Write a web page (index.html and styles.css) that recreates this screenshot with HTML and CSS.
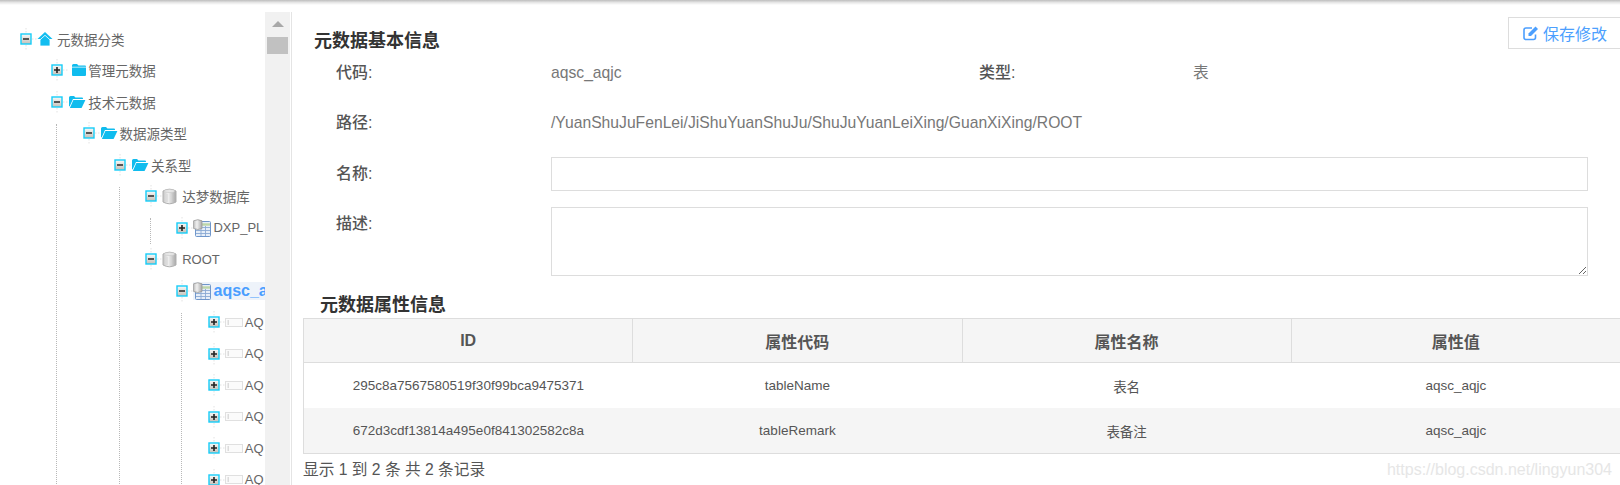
FILE: index.html
```html
<!DOCTYPE html>
<html lang="zh-CN">
<head>
<meta charset="utf-8">
<title>元数据基本信息</title>
<link rel="stylesheet" href="styles.css">
</head>
<body>
<svg class="defs" width="0" height="0" aria-hidden="true">
  <defs>
    <linearGradient id="btn" x1="0" y1="0" x2="0" y2="1"><stop offset="0" stop-color="#fafafa"/><stop offset="1" stop-color="#c4c0b8"/></linearGradient>
    <linearGradient id="cyl" x1="0" y1="0" x2="1" y2="0"><stop offset="0" stop-color="#c4c4c4"/><stop offset=".4" stop-color="#f0f0f0"/><stop offset="1" stop-color="#a8a8a8"/></linearGradient>
    <symbol id="stub" viewBox="0 0 22 24"><path d="M11 1V6M11 18V23M17 12H22" stroke="#e2e2e2" stroke-width="1" stroke-dasharray="1.5 1.5" fill="none"/></symbol>
    <symbol id="minus" viewBox="0 0 22 24"><use href="#stub" width="22" height="24"/><rect x="6" y="7" width="10" height="10" fill="url(#btn)" stroke="#17cdf8" stroke-width="1.4"/><path d="M8 12H14" stroke="#333" stroke-width="1.6"/></symbol>
    <symbol id="plus" viewBox="0 0 22 24"><use href="#stub" width="22" height="24"/><rect x="6" y="7" width="10" height="10" fill="url(#btn)" stroke="#17cdf8" stroke-width="1.4"/><path d="M8 12H14M11 9V15" stroke="#222" stroke-width="1.6"/></symbol>
    <symbol id="house" viewBox="0 0 16 16"><path d="M8 1 15.500 8H.5Z" fill="#12bdf0"/><path d="M3 8.800 8 4.300 13 8.800V15H3Z" fill="#12bdf0" stroke="#fff" stroke-width=".8"/></symbol>
    <symbol id="folder" viewBox="0 0 16 14"><path d="M1 2.500Q1 1 2.500 1H6L7.500 2.600H14Q15 2.600 15 3.600V12Q15 13 14 13H2Q1 13 1 12Z" fill="#10bcee"/><path d="M1 4.200H15" stroke="#fff" stroke-width=".7"/></symbol>
    <symbol id="open" viewBox="0 0 18 14"><path d="M1 2.500Q1 1 2.500 1H6L7.500 2.400H14Q15 2.400 15 3.400V4H5L1.600 11.500 1 11Z" fill="#10bcee"/><path d="M5.400 5H17.400L13.600 13H1.900Z" fill="#10bcee"/></symbol>
    <symbol id="db" viewBox="0 0 15 17"><path d="M1 3Q7.500-.6 14 3V14Q7.500 17.600 1 14Z" fill="url(#cyl)" stroke="#b0b0b0"/><ellipse cx="7.500" cy="3" rx="5" ry="1.500" fill="#e8e8e8" stroke="#c4c4c4" stroke-width=".6"/><path d="M5 6V14M9.500 6V14" stroke="#d4d4d4"/></symbol>
    <symbol id="table" viewBox="0 0 18 18"><rect x="2.500" y="2.500" width="15" height="15" rx="1" fill="#e6eef8" stroke="#6f96cb"/><path d="M3 5.500H17" stroke="#bcd6a8" stroke-width="2.400"/><path d="M3 8.500H17M3 11.500H17M3 14.500H17M8 7V17M12.500 7V17" stroke="#8aa9d4" stroke-width=".9"/><path d="M.6 1.800Q4.800-.4 9 1.800V9.500Q4.800 11.500.6 9.500Z" fill="url(#cyl)" stroke="#999" stroke-width=".8"/></symbol>
    <symbol id="col" viewBox="0 0 18 9"><rect x=".5" y=".5" width="17" height="8" fill="#fbfbfb" stroke="#e0e0e0"/><rect x="2.500" y="2" width="1.500" height="5" fill="#dcdcdc"/></symbol>
  </defs>
</svg>
<div class="topshadow"></div>
<div class="app">
  <aside class="side">
    <nav class="tree">
      <ul class="nodes">
        <li><div class="row"><svg class="tg"><use href="#minus"/></svg><span class="ico"><svg width="16" height="16"><use href="#house"/></svg></span><span class="cjk">元数据分类</span></div>
          <ul class="nodes sub">
            <li><div class="row"><svg class="tg"><use href="#plus"/></svg><span class="ico"><svg class="i-folder" width="16" height="14"><use href="#folder"/></svg></span><span class="cjk">管理元数据</span></div></li>
            <li><div class="row"><svg class="tg"><use href="#minus"/></svg><span class="ico"><svg width="18" height="14"><use href="#open"/></svg></span><span class="cjk">技术元数据</span></div>
              <ul class="nodes sub line">
                <li><div class="row"><svg class="tg"><use href="#minus"/></svg><span class="ico"><svg width="18" height="14"><use href="#open"/></svg></span><span class="cjk">数据源类型</span></div>
                  <ul class="nodes sub">
                    <li><div class="row"><svg class="tg"><use href="#minus"/></svg><span class="ico"><svg width="18" height="14"><use href="#open"/></svg></span><span class="cjk">关系型</span></div>
                      <ul class="nodes sub line">
                        <li><div class="row"><svg class="tg"><use href="#minus"/></svg><span class="ico"><svg width="15" height="17"><use href="#db"/></svg></span><span class="cjk">达梦数据库</span></div>
                          <ul class="nodes sub line">
                            <li><div class="row"><svg class="tg"><use href="#plus"/></svg><span class="ico"><svg width="18" height="18"><use href="#table"/></svg></span><span>DXP_PL</span></div></li>
                          </ul>
                        </li>
                        <li><div class="row"><svg class="tg"><use href="#minus"/></svg><span class="ico"><svg width="15" height="17"><use href="#db"/></svg></span><span>ROOT</span></div>
                          <ul class="nodes sub">
                            <li><div class="row"><svg class="tg"><use href="#minus"/></svg><span class="sel"><span class="ico"><svg width="18" height="18"><use href="#table"/></svg></span><b>aqsc_aqjc</b></span></div>
                              <ul class="nodes sub line">
                                <li><div class="row"><svg class="tg"><use href="#plus"/></svg><span class="ico"><svg width="18" height="9"><use href="#col"/></svg></span><span>AQ</span></div></li>
                                <li><div class="row"><svg class="tg"><use href="#plus"/></svg><span class="ico"><svg width="18" height="9"><use href="#col"/></svg></span><span>AQ</span></div></li>
                                <li><div class="row"><svg class="tg"><use href="#plus"/></svg><span class="ico"><svg width="18" height="9"><use href="#col"/></svg></span><span>AQ</span></div></li>
                                <li><div class="row"><svg class="tg"><use href="#plus"/></svg><span class="ico"><svg width="18" height="9"><use href="#col"/></svg></span><span>AQ</span></div></li>
                                <li><div class="row"><svg class="tg"><use href="#plus"/></svg><span class="ico"><svg width="18" height="9"><use href="#col"/></svg></span><span>AQ</span></div></li>
                                <li><div class="row"><svg class="tg"><use href="#plus"/></svg><span class="ico"><svg width="18" height="9"><use href="#col"/></svg></span><span>AQ</span></div></li>
                              </ul>
                            </li>
                          </ul>
                        </li>
                      </ul>
                    </li>
                  </ul>
                </li>
              </ul>
            </li>
          </ul>
        </li>
      </ul>
    </nav>
    <div class="scrollbar">
      <span class="arrow"></span>
      <span class="thumb"></span>
    </div>
  </aside>
  <main class="main">
    <header class="head">
      <h2 class="title">元数据基本信息</h2>
      <button class="save" type="button">
        <svg width="16" height="16" viewBox="0 0 16 16"><path d="M12.500 9.500V12.500A2 2 0 0 1 10.500 14.500H3A2 2 0 0 1 1 12.500V5A2 2 0 0 1 3 3H9" fill="none" stroke="#4c9ffe" stroke-width="1.600"/><path d="M5.500 8.500 12.500 1.500 15 4 8 11H5.500Z" fill="#4c9ffe"/></svg>
        <span>保存修改</span>
      </button>
    </header>
    <form class="form">
      <label class="lab">代码:</label><div class="val">aqsc_aqjc</div><label class="lab">类型:</label><div class="val">表</div>
      <label class="lab">路径:</label><div class="val wide">/YuanShuJuFenLei/JiShuYuanShuJu/ShuJuYuanLeiXing/GuanXiXing/ROOT</div>
      <label class="lab">名称:</label><input class="field wide" type="text">
      <label class="lab">描述:</label><textarea class="field area wide"></textarea>
    </form>
    <h2 class="title sub-title">元数据属性信息</h2>
    <table class="grid">
      <thead><tr><th>ID</th><th>属性代码</th><th>属性名称</th><th>属性值</th></tr></thead>
      <tbody>
        <tr><td>295c8a7567580519f30f99bca9475371</td><td>tableName</td><td>表名</td><td>aqsc_aqjc</td></tr>
        <tr><td>672d3cdf13814a495e0f841302582c8a</td><td>tableRemark</td><td>表备注</td><td>aqsc_aqjc</td></tr>
      </tbody>
    </table>
    <p class="foot">显示 1 到 2 条 共 2 条记录</p>
  </main>
</div>
<div class="mark">https://blog.csdn.net/lingyun304</div>
</body>
</html>
```
FILE: styles.css
```css
* { box-sizing: border-box; }
html, body { margin: 0; height: 485px; overflow: hidden; background: #fff; }
body {
  position: relative;
  font-family: "Liberation Sans", "Noto Sans CJK SC", sans-serif;
  color: #666;
}
.defs { position: absolute; }
.topshadow {
  position: absolute; left: 0; right: 0; top: 0; height: 5px; z-index: 3;
  background: linear-gradient(#bdbdbd, #e6e6e6 50%, #fff);
}
.app { display: flex; height: 485px; }

/* tree */
.side { display: flex; width: 292px; flex: none; }
.tree {
  width: 265px; flex: none; height: 485px; overflow: hidden;
  padding: 23px 0 0 15px; font-size: 13px; color: #666;
}
.nodes { list-style: none; margin: 0; padding: 0; }
.sub { padding-left: 31.3px; position: relative; }
.line::before {
  content: ""; position: absolute; left: 10px; top: 6px; bottom: 0;
  border-left: 1px dotted #b8b8b8;
}
.row { display: flex; align-items: center; height: 31.5px; white-space: nowrap; position: relative; }
.tg { width: 22px; height: 24px; flex: none; }
.ico { width: 20px; flex: none; display: flex; align-items: center; }
.ico svg { flex: none; }
.i-folder { margin-left: 2.5px; }
.cjk { font-size: 13.5px; }
.sel {
  display: flex; align-items: center; height: 18px; padding-right: 40px;
  background: #eef3fa; color: #4a9eff; font-size: 16px;
}
.sel .ico { width: 20px; }
.scrollbar {
  width: 26px; flex: none; margin-top: 12px; height: 473px; background: #f1f1f1;
  display: flex; flex-direction: column; align-items: center; border-right: 1px solid #fff;
}
.arrow {
  margin-top: 9px; width: 0; height: 0;
  border-left: 6px solid transparent; border-right: 6px solid transparent; border-bottom: 6px solid #a8a8a8;
}
.thumb { margin-top: 10px; width: 21px; height: 17px; background: #c1c1c1; }

/* main */
.main { flex: 1; min-width: 0; border-left: 1px solid #e4e4e4; margin-left: -1px; margin-top: 12px; position: relative; }
.head { display: flex; justify-content: space-between; align-items: flex-start; height: 44px; padding-top: 5px; }
.title { margin: 12px 0 0 22px; font-size: 18px; line-height: 24px; font-weight: 700; color: #333; }
.save {
  flex: none; width: 112px; height: 32px; padding: 0 0 0 14px; margin: 0;
  display: flex; align-items: center; gap: 4px;
  font: 16px "Liberation Sans", "Noto Sans CJK SC", sans-serif; color: #4c9ffe;
  background: #fff; border: 1px solid #ddd; border-right: 0;
}
.form {
  display: grid; grid-template-columns: 215px 428px 214px 1fr;
  grid-template-rows: 50px 51px 50px auto; padding: 0 32px 0 44px; font-size: 15.7px;
}
.lab { line-height: 34px; font-weight: 500; color: #555; font-size: 16px; }
.val { line-height: 34px; color: #777; }
.wide { grid-column: 2 / 5; }
.field { width: 100%; height: 34px; margin: 0; border: 1px solid #ddd; background: #fff; display: block; }
.area { height: 69px; }
.sub-title { margin: 17px 0 1px 28px; }
.grid {
  margin-left: 11px; width: 1318px; table-layout: fixed; border-collapse: collapse;
  border-top: 1px solid #ddd; border-bottom: 1px solid #ddd; border-left: 1px solid #ddd;
}
.grid th {
  height: 44px; background: #f5f5f5; font-size: 16px; font-weight: 700; color: #555;
  border-right: 1px solid #ddd; border-bottom: 1px solid #ddd; padding: 0; text-align: center;
}
.grid td { height: 45.5px; padding: 0; text-align: center; font-size: 13.5px; color: #555; }
.grid tbody tr:nth-child(2) { background: #f5f5f5; }
.foot { margin: 4px 0 0 11px; font-size: 15.7px; line-height: 24px; color: #555; }
.mark {
  position: absolute; right: 8px; top: 460px; font-size: 16px; line-height: 20px; color: #e6e6e6;
}
```
